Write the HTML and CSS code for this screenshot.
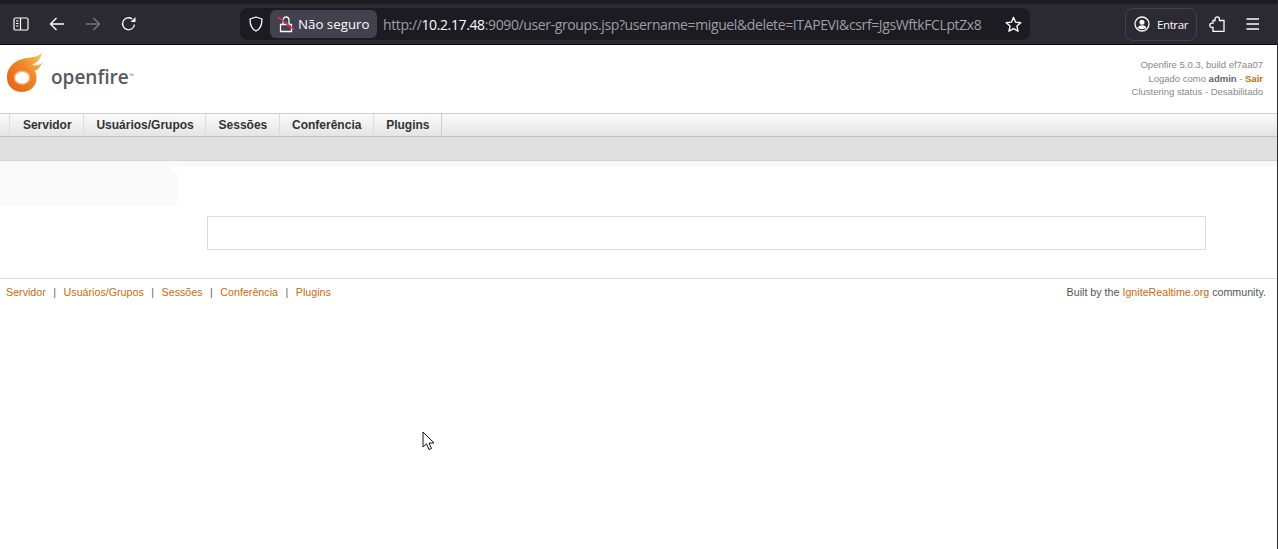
FILE: index.html
```html
<!DOCTYPE html>
<html lang="pt-BR">
<head>
<meta charset="utf-8">
<title>Openfire</title>
<link rel="stylesheet" href="styles.css">
</head>
<body>
<div class="frame">
  <div class="tabstrip"></div>
  <div class="toolbar">
    <div class="tools-left">
      <svg class="ic" viewBox="0 0 16 16"><path d="M1 3.500A1.500 1.500 0 0 1 2.500 2h11A1.500 1.500 0 0 1 15 3.500v9a1.500 1.500 0 0 1-1.500 1.500h-11A1.500 1.500 0 0 1 1 12.500zM7.500 2.500v11M3 5h2.500M3 7.500h2.500M3 10h2.500" fill="none" stroke="#fbfbfe" stroke-width="1.200"/></svg>
      <svg class="ic" viewBox="0 0 16 16"><path d="M15 8H1.500M7.500 2 1.500 8l6 6" fill="none" stroke="#fbfbfe" stroke-width="1.400"/></svg>
      <svg class="ic" viewBox="0 0 16 16"><path d="M1 8h13.500M8.500 2l6 6-6 6" fill="none" stroke="#77767d" stroke-width="1.400"/></svg>
      <svg class="ic" viewBox="0 0 16 16"><path d="M13.500 8.500A6 6 0 1 1 11.200 3" fill="none" stroke="#fbfbfe" stroke-width="1.300"/><path d="M14.500 1v5h-5z" fill="#fbfbfe"/></svg>
    </div>
    <div class="urlbar">
      <svg class="shield" viewBox="0 0 16 16"><path d="M8 1 2 3c0 6 1 10 6 12 5-2 6-6 6-12z" fill="none" stroke="#fbfbfe" stroke-width="1.300" stroke-linejoin="round"/></svg>
      <div class="secure">
        <svg class="lock" viewBox="0 0 18 18"><path d="M6 9V5a3 3 0 0 1 6 0v4M3.500 9.500h11v7h-11z" fill="none" stroke="#fbfbfe" stroke-width="1.300"/><path d="M1 2 17 14.500" stroke="#d8305c" stroke-width="1.600"/></svg>
        <span>Não seguro</span>
      </div>
      <div class="url">http://<b>10.2.17.48</b>:9090/user-groups.jsp?username=miguel&amp;delete=ITAPEVI&amp;csrf=JgsWftkFCLptZx8</div>
      <svg class="star" viewBox="0 0 16 16"><path d="m8 1.300 2 4.500 4.900.5-3.700 3.200 1.100 4.800L8 11.800l-4.300 2.500 1.100-4.800L1.100 6.300 6 5.800z" fill="none" stroke="#fbfbfe" stroke-width="1.300" stroke-linejoin="round"/></svg>
    </div>
    <div class="tools-right">
      <div class="signin">
        <svg class="acct" viewBox="0 0 16 16"><circle cx="8" cy="8" r="7" fill="none" stroke="#fbfbfe" stroke-width="1.300"/><circle cx="8" cy="6.300" r="2.500" fill="#fbfbfe"/><path d="M3.500 12c1-2 2.500-2.700 4.500-2.700s3.500.7 4.500 2.700C11 13.500 5 13.500 3.500 12z" fill="#fbfbfe"/></svg>
        <span>Entrar</span>
      </div>
      <svg class="ic" viewBox="0 0 16 16"><path d="M6 4.500V3a2.200 2.200 0 0 1 4.400 0v1.500H15v11H4v-4H3a2.200 2.200 0 0 1 0-4.400h1V4.500z" fill="none" stroke="#fbfbfe" stroke-width="1.300"/></svg>
      <svg class="ic" viewBox="0 0 16 16"><path d="M2.500 3h12.500M2.500 8h12.500M2.500 13h12.500" stroke="#fbfbfe" stroke-width="1.300"/></svg>
    </div>
  </div>
  <div class="page">
    <header class="head">
      <div class="logo">
        <svg class="flame" viewBox="0 0 40 42">
          <defs>
            <linearGradient id="fl" x1="0" y1="1" x2="1" y2="0"><stop offset="0" stop-color="#e45f18"/><stop offset=".55" stop-color="#ef8526"/><stop offset="1" stop-color="#fbcb68"/></linearGradient>
          </defs>
          <path d="M38 0C35 5 30 5 24 6 12 7 1 14 1 27c0 9 7 15 16 15s16-7 15-16c0-3-1-5-2-6 4-1 7-5 8-9-3 3-7 3-11 3 5-2 10-7 11-14z" fill="url(#fl)"/>
          <ellipse cx="17" cy="27" rx="8" ry="6.800" fill="#fff" stroke="#f6b273" stroke-width="1.500"/>
        </svg>
        <span class="wordmark">openfire</span><span class="tm">™</span>
      </div>
      <div class="info">
        <div>Openfire 5.0.3, build ef7aa07</div>
        <div>Logado como <b>admin</b> - <a class="sair">Sair</a></div>
        <div>Clustering status - Desabilitado</div>
      </div>
    </header>
    <nav class="nav">
      <a>Servidor</a><a>Usuários/Grupos</a><a>Sessões</a><a>Conferência</a><a>Plugins</a>
    </nav>
    <div class="subnav"></div>
    <main class="main">
      <aside class="side"></aside>
      <section class="content"><div class="box"></div></section>
    </main>
    <footer class="foot">
      <div class="foot-links">
        <a>Servidor</a><i>|</i><a>Usuários/Grupos</a><i>|</i><a>Sessões</a><i>|</i><a>Conferência</a><i>|</i><a>Plugins</a>
      </div>
      <div>Built by the <a>IgniteRealtime.org</a> community.</div>
    </footer>
    <svg class="cursor" viewBox="0 0 14 20"><path d="M1 1v15l3.500-3.200 2.500 5.700 2.500-1-2.500-5.500H12z" fill="#fff" stroke="#111" stroke-width="1"/></svg>
  </div>
</div>
</body>
</html>
```

FILE: styles.css
```css
* { box-sizing: border-box; }
html, body { margin: 0; height: 100%; }
body { background: #fff; overflow: hidden; }
.frame { height: 549px; display: flex; flex-direction: column; border-right: 1px solid #2b2a33; }

.tabstrip { height: 4px; background: #1c1b22; }
.toolbar {
  height: 41px; background: #2b2a33; border-bottom: 1px solid #0c0c0d;
  display: flex; align-items: center; font-family: "Open Sans", sans-serif; color: #fbfbfe;
}
.ic { width: 16px; height: 16px; flex: none; }
.tools-left { width: 240px; padding-left: 13px; display: flex; gap: 20px; flex: none; }
.urlbar {
  width: 790px; height: 32px; background: #1c1b22; border-radius: 8px; flex: none;
  display: flex; align-items: center; padding-left: 8px;
}
.shield { width: 16px; height: 16px; flex: none; }
.secure {
  margin-left: 6px; height: 28px; width: 107px; background: #42414d; border-radius: 6px; flex: none;
  display: flex; align-items: center; gap: 3px; padding-left: 7px; font-size: 13.300px;
}
.lock { width: 18px; height: 18px; flex: none; }
.url { margin-left: 6px; width: 604px; font-size: 14px; white-space: nowrap; color: #9e9ea4; letter-spacing: -.38px; }
.url b { font-weight: 400; color: #fbfbfe; }
.star { width: 17px; height: 17px; flex: none; margin-left: 18px; }
.tools-right { display: flex; align-items: center; margin-left: 95px; gap: 12px; }
.signin {
  width: 72px; height: 33px; border: 1px solid #42414d; border-radius: 8px;
  display: flex; align-items: center; gap: 7px; padding-left: 8px; font-size: 11.500px; letter-spacing: -.4px;
}
.acct { width: 16px; height: 16px; flex: none; }
.tools-right .ic:last-child { margin-left: 7px; }

.page { flex: 1; position: relative; font-family: "Liberation Sans", Arial, sans-serif; }
.head { height: 68px; display: flex; justify-content: space-between; }
.logo { display: flex; align-items: flex-start; padding: 7px 0 0 6px; }
.flame { width: 38px; height: 40px; flex: none; }
.wordmark { font-family: "Open Sans", sans-serif; font-weight: 600; font-size: 19px; line-height: 26px; color: #555a60; margin: 12px 0 0 7px; }
.tm { font-size: 5px; color: #555a60; margin-top: 20px; }
.info { padding: 13px 14px 0 0; text-align: right; font-size: 9.500px; line-height: 13.500px; color: #888; }
.info b { color: #666; }
.sair { color: #c96a10; font-weight: 700; }

.nav {
  height: 24px; padding-left: 9.400px; display: flex;
  background: linear-gradient(#fbfbfb, #e4e4e4);
  border-top: 1px solid #ccc; border-bottom: 1px solid #c4c4c4;
}
.nav a {
  font-size: 12px; font-weight: 700; color: #333; line-height: 22px; padding: 0 11.300px 0 12.500px;
  border-left: 1px solid #ddd;
}
.nav a:last-child { border-right: 1px solid #ccc; }
.subnav { height: 24px; background: #e0e0e0; border-bottom: 1px solid #d4d4d4; }

.main { height: 118px; display: flex; border-bottom: 1px solid #ddd; background: linear-gradient(#f8f8f8, #f8f8f8) no-repeat 0 0 / 100% 5px; }
.side { width: 177px; height: 45px; background: #fafafa; flex: none; }
.content { flex: 1; position: relative; margin-top: 5px; background: #fff; padding: 50px 71px 0 30px; }
.content::before { content: ""; position: absolute; left: -5px; top: 0; width: 10px; height: 6px; background: #fff; border-top-left-radius: 5px; }
.box { height: 34px; border: 1px solid #ddd; }

.foot { display: flex; justify-content: space-between; padding: 6px 11px 0 6px; font-size: 10.700px; line-height: 14px; color: #555; }
.foot a { color: #c76a10; }
.foot i { font-style: normal; margin: 0 7.500px; color: #666; }

.cursor { position: absolute; left: 422px; top: 386px; width: 14px; height: 20px; }
```
